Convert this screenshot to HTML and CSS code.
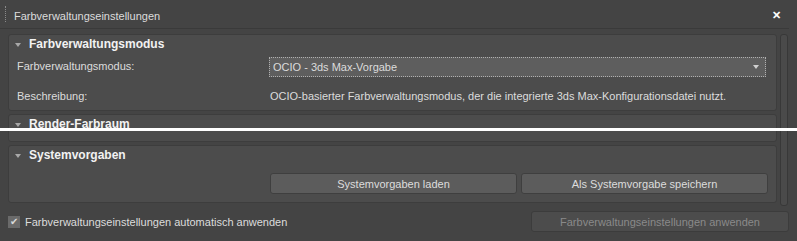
FILE: index.html
```html
<!DOCTYPE html>
<html lang="de">
<head>
    <meta charset="UTF-8">
    <title>Farbverwaltungseinstellungen</title>
    <link rel="stylesheet" href="styles.css">
</head>
<body>
    <div class="window">
        <!-- Titelleiste -->
        <div class="titlebar">
            <span class="grip"></span>
            <span class="title">Farbverwaltungseinstellungen</span>
            <span class="close">&#x2715;</span>
        </div>

        <div class="content">
            <div class="rollouts">
                <!-- Farbverwaltungsmodus -->
                <div class="rollout">
                    <div class="rollout-head"><span class="arrow"></span>Farbverwaltungsmodus</div>
                    <div class="row">
                        <span class="label">Farbverwaltungsmodus:</span>
                        <div class="dropdown">
                            <span>OCIO - 3ds Max-Vorgabe</span>
                            <span class="drop-arrow"></span>
                        </div>
                    </div>
                    <div class="row desc">
                        <span class="label">Beschreibung:</span>
                        <span class="value">OCIO-basierter Farbverwaltungsmodus, der die integrierte 3ds Max-Konfigurationsdatei nutzt.</span>
                    </div>
                </div>

                <!-- Render-Farbraum -->
                <div class="rollout small">
                    <div class="rollout-head"><span class="arrow"></span>Render-Farbraum</div>
                </div>

                <!-- Systemvorgaben -->
                <div class="rollout">
                    <div class="rollout-head"><span class="arrow"></span>Systemvorgaben</div>
                    <div class="buttons">
                        <button class="btn">Systemvorgaben laden</button>
                        <button class="btn">Als Systemvorgabe speichern</button>
                    </div>
                </div>
            </div>
            <div class="scrollbar"></div>
        </div>

        <div class="footer">
            <label class="check"><span class="box">&#x2714;</span>Farbverwaltungseinstellungen automatisch anwenden</label>
            <button class="btn apply" disabled>Farbverwaltungseinstellungen anwenden</button>
        </div>
    </div>

    <div class="cut"></div>
</body>
</html>
```

FILE: styles.css
```css
body {
    margin: 0;
    width: 797px;
    height: 241px;
    overflow: hidden;
    background-color: #444444;
    font-family: "Liberation Sans", Arial, sans-serif;
    font-size: 11px;
    color: #dcdcdc;
    position: relative;
}

.titlebar {
    height: 28px;
    display: flex;
    align-items: center;
    border-bottom: 1px solid #3a3a3a;
    margin-right: 8px;
}

.grip {
    width: 0;
    height: 16px;
    margin-left: 5px;
    border-left: 1px dotted #8a8a8a;
}

.title {
    margin-left: 8px;
    margin-top: 4px;
    flex: 1;
}

.close {
    font-weight: bold;
    color: #ffffff;
    font-size: 11px;
    margin-right: 8px;
    margin-top: 3px;
}

.content {
    display: flex;
    margin-top: 5px;
}

.rollouts {
    margin-left: 8px;
    width: 769px;
}

.rollout {
    background-color: #4c4c4c;
    border: 1px solid #3d3d3d;
    border-radius: 3px;
    margin-bottom: 3px;
}

.rollout-head {
    font-weight: bold;
    font-size: 12px;
    color: #f2f2f2;
    height: 19px;
    line-height: 19px;
    display: flex;
    align-items: center;
}

.arrow {
    width: 0;
    height: 0;
    margin: 0 8px 0 6px;
    border-left: 3px solid transparent;
    border-right: 3px solid transparent;
    border-top: 4px solid #a8a8a8;
}

.row {
    display: flex;
    align-items: center;
    padding-left: 8px;
}

.label {
    width: 252px;
}

.dropdown {
    width: 486px;
    height: 18px;
    background-color: #5e5e5e;
    border: 1px dotted #b0b0b0;
    display: flex;
    align-items: center;
    justify-content: space-between;
    padding: 0 6px 0 3px;
    margin-top: 3px;
}

.drop-arrow {
    width: 0;
    height: 0;
    border-left: 3px solid transparent;
    border-right: 3px solid transparent;
    border-top: 4px solid #cfcfcf;
}

.desc {
    box-sizing: border-box;
    height: 33px;
    padding-top: 5px;
}

.desc .value {
    margin-left: 1px;
}

.small {
    height: 26px;
}

.buttons {
    display: flex;
    gap: 4px;
    padding: 8px 0 8px 261px;
}

.btn {
    font-family: "Liberation Sans", Arial, sans-serif;
    font-size: 11px;
    color: #dcdcdc;
    background-color: #5c5c5c;
    border: 1px solid #3f3f3f;
    border-radius: 3px;
    height: 21px;
    width: 247px;
    padding: 0;
}

.scrollbar {
    width: 6px;
    height: 170px;
    margin-left: 3px;
    background-color: #4a4a4a;
    border: 1px solid #383838;
    border-radius: 3px;
}

.footer {
    display: flex;
    align-items: center;
    justify-content: space-between;
    margin-top: 5px;
    padding: 0 8px;
}

.check {
    display: flex;
    align-items: center;
}

.box {
    width: 12px;
    height: 12px;
    background-color: #6a6a6a;
    color: #d8d8d8;
    font-size: 10px;
    line-height: 12px;
    text-align: center;
    margin-right: 5px;
}

.apply {
    width: 258px;
    color: #8a8a8a;
    background-color: #4c4c4c;
    border-color: #3c3c3c;
}

.cut {
    position: absolute;
    left: 0;
    top: 128px;
    width: 797px;
    height: 3px;
    background-color: #ffffff;
}
```
